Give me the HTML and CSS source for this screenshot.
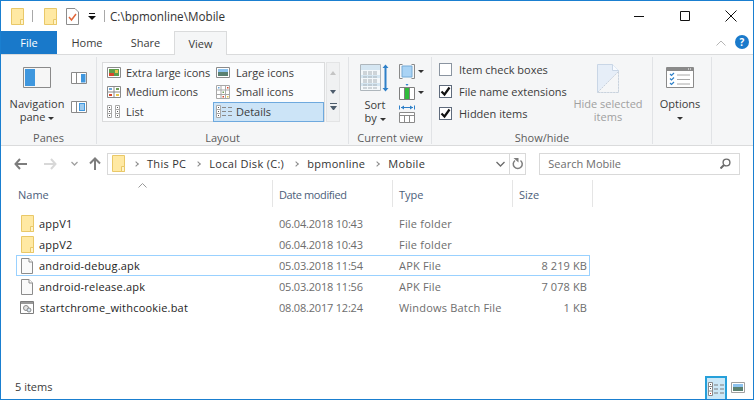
FILE: index.html
```html
<!DOCTYPE html>
<html lang="en">
<head>
<meta charset="UTF-8">
<meta name="viewport" content="width=device-width, initial-scale=1.0">
<title>Mobile</title>
<link rel="stylesheet" href="styles.css">
</head>
<body>

<svg class="defs" width="0" height="0">
    <symbol id="folder" viewBox="0 0 13 17">
        <path d="M.5.5h12v16H.5z" fill="#ffe9a3" stroke="#e9c868"/>
        <path d="M9.5 16.5v-5h3v5z" fill="#fff3c8" stroke="#e9c868"/>
    </symbol>
    <symbol id="doc" viewBox="0 0 12 16">
        <path d="M.5.5h7.5l3.5 3.5v11.5H.5z" fill="#fafafa" stroke="#8c8c8c"/>
        <path d="M8 .5V4h3.5" fill="#fff" stroke="#8c8c8c"/>
    </symbol>
    <symbol id="tick" viewBox="0 0 11 11">
        <path d="M1.500 5.500l3 3 5-7" fill="none" stroke="#111" stroke-width="2.200"/>
    </symbol>
</svg>

<div class="window">

    <div class="titlebar">
        <svg class="ico-folder"><use href="#folder"/></svg>
        <span class="qa-sep"></span>
        <svg class="ico-folder qa-second"><use href="#folder"/></svg>
        <svg class="qa-props" width="13" height="17" viewBox="0 0 13 17">
            <path d="M.5.5h8.5l3.5 3.5v12.500H.5z" fill="#fff" stroke="#8c8c8c"/>
            <path d="M3 9l2.500 3 4.500-6" fill="none" stroke="#e2673a" stroke-width="1.500"/>
        </svg>
        <svg class="qa-more" width="8" height="7" viewBox="0 0 8 7">
            <path d="M1 0h6v1H1zM0 3h8L4 7z" fill="#111"/>
        </svg>
        <span class="qa-sep"></span>
        <span class="title">C:\bpmonline\Mobile</span>
        <div class="controls">
            <svg width="12" height="12" viewBox="0 0 12 12"><path d="M1 6.500h10" stroke="#111"/></svg>
            <svg width="12" height="12" viewBox="0 0 12 12"><path d="M1.500 1.500h9v9h-9z" fill="none" stroke="#111"/></svg>
            <svg width="12" height="12" viewBox="0 0 12 12"><path d="M.5.500l11 11M11.500.500l-11 11" stroke="#111"/></svg>
        </div>
    </div>

    <div class="tabs">
        <div class="tab tab-file">File</div>
        <div class="tab tab-home">Home</div>
        <div class="tab tab-share">Share</div>
        <div class="tab tab-view">View</div>
        <svg class="collapse" width="10" height="6" viewBox="0 0 10 6"><path d="M.5 5.500L5 1l4.500 4.500" fill="none" stroke="#b5b5b5"/></svg>
        <div class="help">?</div>
    </div>

    <div class="ribbon">

        <div class="group group-panes">
            <div class="group-body panes-body">
                <div class="big-btn nav-btn">
                    <svg width="28" height="21" viewBox="0 0 28 21">
                        <path d="M.5.500h27v20H.5z" fill="#f6f6f6" stroke="#8a8a8a"/>
                        <path d="M2 2h10v17H2z" fill="#3f97de"/>
                    </svg>
                    <span class="big-label">Navigation<br>pane <i class="caret"></i></span>
                </div>
                <div class="pane-small">
                    <svg width="16" height="12" viewBox="0 0 16 12">
                        <path d="M.5.500h15v11H.5z" fill="#fff" stroke="#8a8a8a"/>
                        <path d="M10 2h4.500v8.500H10z" fill="#3f97de"/>
                        <path d="M5.500 1v10" stroke="#8a8a8a"/>
                    </svg>
                    <svg width="16" height="12" viewBox="0 0 16 12">
                        <path d="M.5.500h15v11H.5z" fill="#fff" stroke="#8a8a8a"/>
                        <path d="M5.500 1v10" stroke="#8a8a8a"/>
                        <path d="M8 2h6v8H8z" fill="#3f97de"/>
                        <path d="M9 4h4M9 6h4M9 8h4" stroke="#fff"/>
                    </svg>
                </div>
            </div>
            <div class="group-label">Panes</div>
        </div>

        <div class="group group-layout">
            <div class="group-body layout-body">
                <div class="gallery">
                    <div class="gal-item">
                        <svg width="14" height="11" viewBox="0 0 14 11"><path d="M.5.500h13v10H.5z" fill="#fff" stroke="#8a8a8a"/><path d="M2 2h10v7H2z" fill="#5f9e4a"/><path d="M2 6h5v3H2z" fill="#d9472b"/><path d="M8 3h3v3H8z" fill="#e8c54a"/></svg>
                        Extra large icons
                    </div>
                    <div class="gal-item">
                        <svg width="14" height="11" viewBox="0 0 14 11"><path d="M.5.500h13v10H.5z" fill="#fff" stroke="#8a8a8a"/><path d="M2 2h10v3H2z" fill="#8cc2ee"/><path d="M2 5h10v4H2z" fill="#5a8070"/></svg>
                        Large icons
                    </div>
                    <div class="gal-item">
                        <svg width="14" height="12" viewBox="0 0 14 12"><path d="M.5.500h13v11H.5zM.5 6h13M7 .500v11" fill="#fff" stroke="#8a8a8a"/><path d="M2 2h3v2H2z" fill="#6aa5d8"/><path d="M9 2h3v2H9z" fill="#6f9e57"/><path d="M2 8h3v2H2z" fill="#d9472b"/><path d="M9 8h3v2H9z" fill="#e8c54a"/></svg>
                        Medium icons
                    </div>
                    <div class="gal-item">
                        <svg width="14" height="14" viewBox="0 0 14 14"><path d="M.5.500h13v13H.5zM.5 5h13M.5 9.500h13M5 .500v13M9.500.500v13" fill="#fff" stroke="#a8a8a8"/><path d="M2 2h1.500v1.500H2z" fill="#6aa5d8"/><path d="M11 2h1.500v1.500H11zM6.500 11h1.500v1.500H6.500z" fill="#d9472b"/><path d="M6.500 6.500h1.500v1.500H6.500z" fill="#6f9e57"/><path d="M11 11h1.500v1.500H11z" fill="#e8c54a"/></svg>
                        Small icons
                    </div>
                    <div class="gal-item">
                        <svg width="14" height="13" viewBox="0 0 14 13"><path d="M.5.500h4v12h-4zM.5 4.500h4M.5 8.500h4M8.500.500h4v12h-4zM8.500 4.500h4M8.500 8.500h4" fill="#fff" stroke="#a8a8a8"/><path d="M2 2h1v1H2zM2 6h1v1H2zM2 10h1v1H2zM10 2h1v1h-1zM10 6h1v1h-1zM10 10h1v1h-1z" fill="#555"/></svg>
                        List
                    </div>
                    <div class="gal-item gal-selected">
                        <svg width="16" height="13" viewBox="0 0 16 13"><path d="M.5.500h4v12h-4zM.5 4.500h4M.5 8.500h4" fill="#fff" stroke="#a8a8a8"/><path d="M2 2h1v1H2zM2 6h1v1H2zM2 10h1v1H2z" fill="#555"/><path d="M6 2.500h4M12 2.500h4M6 6.500h4M12 6.500h4M6 10.500h4M12 10.500h4" stroke="#8a8a8a"/></svg>
                        Details
                    </div>
                </div>
                <div class="gal-scroll">
                    <span class="up"></span>
                    <span class="down"></span>
                    <span class="more"></span>
                </div>
            </div>
            <div class="group-label">Layout</div>
        </div>

        <div class="group group-current">
            <div class="group-body current-body">
                <div class="big-btn sort-btn">
                    <svg width="30" height="28" viewBox="0 0 30 28">
                        <path d="M.5.500h20v26H.5z" fill="#f4f8fb" stroke="#aeb6bc"/>
                        <path d="M1 1h19v5H1zM1 11h19v3H1zM1 19h19v3H1z" fill="#d5e6f2"/>
                        <path d="M3 8h15M3 10h15M3 13h15M3 16h15M3 18h15M3 21h15M3 24h15" stroke="#a8b0b6" stroke-dasharray="4 1"/>
                        <path d="M25.500 2v24" stroke="#2f80c8" stroke-width="2"/>
                        <path d="M22.500 4l3-3.500 3 3.500zM22.500 24l3 3.500 3-3.500z" fill="#2f80c8"/>
                    </svg>
                    <span class="big-label">Sort<br>by <i class="caret"></i></span>
                </div>
                <div class="current-small">
                    <div class="cur-icon">
                        <svg width="16" height="15" viewBox="0 0 16 15"><path d="M3.500.500h-3v14h3M12.500.500h3v14h-3" fill="none" stroke="#8a8a8a"/><path d="M3 2h10v11H3z" fill="#a9d3f5" stroke="#76abd6"/></svg>
                        <i class="caret"></i>
                    </div>
                    <div class="cur-icon">
                        <svg width="16" height="16" viewBox="0 0 16 16"><path d="M.5 3.500h15v12H.5zM5.500 3.500v12M10.500 3.500v12" fill="#fff" stroke="#7f7f7f"/><path d="M6 4h4v11H6z" fill="#2fbb3b"/><path d="M6.500 0h3L8 2z" fill="#2f80c8"/></svg>
                        <i class="caret"></i>
                    </div>
                    <div class="cur-icon">
                        <svg width="16" height="18" viewBox="0 0 16 18"><path d="M.5.500v4M15.500.500v4M2 2.500h12" stroke="#2f80c8"/><path d="M5 .500L2 2.500l3 2zM11 .500l3 2-3 2z" fill="#2f80c8"/><path d="M.5 7.500h15v10H.5zM.5 10.500h15M5.500 10.500v7M10.500 10.500v7" fill="#fff" stroke="#8a8a8a"/></svg>
                    </div>
                </div>
            </div>
            <div class="group-label">Current view</div>
        </div>

        <div class="group group-show">
            <div class="group-body show-body">
                <div class="checks">
                    <div class="check-row"><span class="check"></span>Item check boxes</div>
                    <div class="check-row"><span class="check"><svg class="tick"><use href="#tick"/></svg></span>File name extensions</div>
                    <div class="check-row"><span class="check"><svg class="tick"><use href="#tick"/></svg></span>Hidden items</div>
                </div>
                <div class="big-btn hide-btn">
                    <svg width="22" height="29" viewBox="0 0 22 29">
                        <path d="M.5.500h15l6 6v22H.5z" fill="#e6eef8" stroke="#c9d6e6"/>
                        <path d="M15.500.500v6h6" fill="#f8fbff" stroke="#c9d6e6"/>
                        <path d="M.5 28.500l21-21v21z" fill="#f5f6f7"/>
                        <path d="M.5 28.500l21-21v21z" fill="none" stroke="#c9d2dc" stroke-dasharray="2 1"/>
                    </svg>
                    <span class="big-label">Hide selected<br>items</span>
                </div>
            </div>
            <div class="group-label">Show/hide</div>
        </div>

        <div class="group group-options">
            <div class="group-body options-body">
                <div class="big-btn">
                    <svg width="28" height="21" viewBox="0 0 28 21">
                        <path d="M.5.500h27v20H.5z" fill="#fff" stroke="#8a8a8a"/>
                        <path d="M1 1h26v3H1z" fill="#8a8a8a"/>
                        <path d="M22 2h1M24 2h1" stroke="#fff"/>
                        <path d="M4 7l1.500 1.500L8 6M4 11.500l1.500 1.500L8 10.500M4 16l1.500 1.500L8 15" fill="none" stroke="#2f80c8" stroke-width="1.200"/>
                        <path d="M11 8h13M11 12.500h13M11 17h13" stroke="#a8a8a8"/>
                    </svg>
                    <span class="big-label">Options<br><i class="caret"></i></span>
                </div>
            </div>
        </div>
    </div>

    <div class="navbar">
        <svg class="nav-back" width="13" height="12" viewBox="0 0 13 12"><path d="M6 1L1.500 6 6 11M2 6h11" fill="none" stroke="#7d7d7d" stroke-width="2"/></svg>
        <svg class="nav-fwd" width="13" height="12" viewBox="0 0 13 12"><path d="M7 1l4.500 5L7 11M11 6H0" fill="none" stroke="#d8d8d8" stroke-width="2"/></svg>
        <svg class="nav-down" width="7" height="5" viewBox="0 0 7 5"><path d="M.5 1L3.500 4l3-3" fill="none" stroke="#a0a0a0" stroke-width="1.300"/></svg>
        <svg class="nav-up" width="12" height="13" viewBox="0 0 12 13"><path d="M1 6.500L6 1.500l5 5M6 2v11" fill="none" stroke="#7d7d7d" stroke-width="2"/></svg>
        <div class="address">
            <svg class="ico-folder addr-folder"><use href="#folder"/></svg>
            <span class="crumb-sep"></span><span class="crumb">This PC</span>
            <span class="crumb-sep"></span><span class="crumb">Local Disk (C:)</span>
            <span class="crumb-sep"></span><span class="crumb">bpmonline</span>
            <span class="crumb-sep"></span><span class="crumb">Mobile</span>
            <svg class="addr-drop" width="9" height="6" viewBox="0 0 9 6"><path d="M.5 1l4 4 4-4" fill="none" stroke="#6b6b6b" stroke-width="1.300"/></svg>
            <div class="addr-refresh">
                <svg width="12" height="13" viewBox="0 0 12 13"><path d="M3 3.500A4.500 4.500 0 1 0 8.500 3.500" fill="none" stroke="#7d7d7d" stroke-width="1.500"/><path d="M1.500 1h5v4.500z" fill="#7d7d7d"/></svg>
            </div>
        </div>
        <div class="search">
            <span>Search Mobile</span>
            <svg width="11" height="11" viewBox="0 0 11 11"><circle cx="6.500" cy="4.500" r="3.400" fill="none" stroke="#6b6b6b" stroke-width="1.400"/><path d="M4 7L.5 10.500" stroke="#6b6b6b" stroke-width="2"/></svg>
        </div>
    </div>

    <div class="files">
        <div class="head">
            <svg class="sort-caret" width="9" height="5" viewBox="0 0 9 5"><path d="M.5 4.500l4-4 4 4" fill="none" stroke="#9a9a9a"/></svg>
            <div class="col col-name">Name</div>
            <div class="col col-date">Date modified</div>
            <div class="col">Type</div>
            <div class="col">Size</div>
        </div>
        <div class="rows">
            <div class="row">
                <div class="cell-name"><svg class="ico-folder"><use href="#folder"/></svg>appV1</div>
                <div class="cell cell-date">06.04.2018 10:43</div>
                <div class="cell cell-type">File folder</div>
                <div class="cell cell-size"></div>
            </div>
            <div class="row">
                <div class="cell-name"><svg class="ico-folder"><use href="#folder"/></svg>appV2</div>
                <div class="cell cell-date">06.04.2018 10:43</div>
                <div class="cell cell-type">File folder</div>
                <div class="cell cell-size"></div>
            </div>
            <div class="row row-focus">
                <div class="cell-name"><svg class="ico-doc"><use href="#doc"/></svg>android-debug.apk</div>
                <div class="cell cell-date">05.03.2018 11:54</div>
                <div class="cell cell-type">APK File</div>
                <div class="cell cell-size">8 219 KB</div>
            </div>
            <div class="row">
                <div class="cell-name"><svg class="ico-doc"><use href="#doc"/></svg>android-release.apk</div>
                <div class="cell cell-date">05.03.2018 11:56</div>
                <div class="cell cell-type">APK File</div>
                <div class="cell cell-size">7 078 KB</div>
            </div>
            <div class="row">
                <div class="cell-name">
                    <svg class="ico-bat" width="14" height="13" viewBox="0 0 14 13">
                        <path d="M.5.500h13v12H.5z" fill="#fff" stroke="#7d7d7d"/>
                        <path d="M1 1h12v2H1z" fill="#9a9a9a"/>
                        <circle cx="6" cy="7" r="2.500" fill="#e4e4e4" stroke="#8a8a8a"/>
                        <circle cx="9" cy="9" r="2" fill="#d4e4f2" stroke="#8a8a8a"/>
                    </svg>startchrome_withcookie.bat
                </div>
                <div class="cell cell-date">08.08.2017 12:24</div>
                <div class="cell cell-type">Windows Batch File</div>
                <div class="cell cell-size">1 KB</div>
            </div>
        </div>
    </div>

    <div class="status">
        <span class="count">5 items</span>
        <div class="view-toggle view-on">
            <svg width="16" height="14" viewBox="0 0 16 14"><path d="M.5.500h4v13h-4zM.5 4.500h4M.5 9h4" fill="#fff" stroke="#8a8a8a"/><path d="M2 2h1v1H2zM2 6h1v1H2z" fill="#555"/><path d="M2 11h1v1H2z" fill="#c0392b"/><path d="M6 3h4M12 3h4M6 7h4M12 7h4M6 11h4M12 11h4" stroke="#7d7d7d"/></svg>
        </div>
        <div class="view-toggle view-large">
            <svg width="14" height="11" viewBox="0 0 14 11"><path d="M.5.500h13v10H.5z" fill="#fff" stroke="#a0a0a0"/><path d="M2 2h10v3H2z" fill="#8cc2ee"/><path d="M2 5h10v4H2z" fill="#5a8070"/></svg>
        </div>
    </div>
</div>

</body>
</html>
```

FILE: styles.css
```css
* {
    box-sizing: border-box;
}
html, body {
    margin: 0;
    padding: 0;
}
body {
    width: 754px;
    height: 400px;
    overflow: hidden;
    background: #fff;
    color: #1e1e1e;
    font-family: "Open Sans", "Noto Sans", sans-serif;
    font-size: 11px;
    line-height: 13px;
}
.defs {
    position: absolute;
}
svg {
    display: block;
    flex: none;
}
.window {
    width: 754px;
    height: 400px;
    border: 1px solid #1a7fd0;
    display: flex;
    flex-direction: column;
}

/* title bar */
.titlebar {
    height: 30px;
    display: flex;
    align-items: center;
    padding-left: 10px;
}
.ico-folder {
    width: 13px;
    height: 17px;
}
.qa-sep {
    width: 1px;
    height: 12px;
    background: #a8a8a8;
    margin-left: 8px;
}
.qa-second {
    margin-left: 11px;
}
.qa-props {
    margin-left: 9px;
}
.qa-more {
    margin-left: 9px;
}
.title {
    margin-left: 5px;
    font-size: 11.700px;
    color: #333;
}
.controls {
    margin-left: auto;
    display: flex;
    gap: 34px;
    padding-right: 16px;
}

/* tabs */
.tabs {
    height: 23px;
    display: flex;
    align-items: flex-end;
    position: relative;
    z-index: 1;
}
.tab {
    height: 23px;
    display: flex;
    align-items: center;
    justify-content: center;
    color: #3b3b3b;
}
.tab-file {
    width: 56px;
    background: #1979ca;
    color: #fff;
}
.tab-home {
    width: 60px;
}
.tab-share {
    width: 57px;
}
.tab-view {
    width: 53px;
    background: #f5f6f7;
    border: 1px solid #dadbdc;
    border-bottom: none;
    margin-bottom: -1px;
    height: 24px;
}
.collapse {
    margin-left: auto;
    margin-bottom: 8px;
}
.help {
    width: 14px;
    height: 14px;
    border-radius: 50%;
    background: #1a7acb;
    color: #fff;
    font-weight: 700;
    font-size: 10px;
    line-height: 14px;
    text-align: center;
    margin: 0 4px 5px 9px;
}

/* ribbon */
.ribbon {
    height: 92px;
    background: #f5f6f7;
    border-top: 1px solid #dadbdc;
    border-bottom: 1px solid #dadbdc;
    display: flex;
    padding-top: 2px;
}
.group {
    height: 87px;
    border-right: 1px solid #e1e3e6;
    display: flex;
    flex-direction: column;
}
.group-body {
    flex: 1;
    display: flex;
    min-height: 0;
}
.group-label {
    height: 14px;
    text-align: center;
    color: #5c5c5c;
    line-height: 15px;
}
.group-panes {
    width: 96px;
}
.group-layout {
    width: 252px;
}
.group-current {
    width: 83px;
}
.group-show {
    width: 221px;
}
.group-options {
    width: 59px;
}
.big-btn {
    display: flex;
    flex-direction: column;
    align-items: center;
}
.big-label {
    display: block;
    text-align: center;
    color: #3b3b3b;
    white-space: nowrap;
}
.caret {
    display: inline-block;
    width: 0;
    height: 0;
    border: 3px solid transparent;
    border-top: 3px solid #333;
    border-bottom: none;
    vertical-align: middle;
}

/* panes */
.panes-body {
    padding-left: 8px;
}
.nav-btn {
    padding-top: 10px;
    width: 56px;
}
.nav-btn .big-label {
    margin-top: 9px;
}
.pane-small {
    margin-left: 6px;
    padding-top: 15px;
    display: flex;
    flex-direction: column;
    gap: 17px;
}

/* layout gallery */
.layout-body {
    padding: 5px 0 0 5px;
}
.gallery {
    width: 223px;
    height: 60px;
    background: #fbfcfd;
    border: 1px solid #dadbdc;
    display: grid;
    grid-template-columns: 110px 111px;
    grid-template-rows: 19px 20px 20px;
}
.gal-item {
    display: flex;
    align-items: center;
    gap: 4px;
    padding: 0 0 1px 3px;
    white-space: nowrap;
    color: #3b3b3b;
}
.gal-item:nth-child(even) {
    padding-left: 2px;
    gap: 5px;
}
.gal-item svg {
    width: 16px;
}
.gallery .gal-selected {
    background: #cce4f7;
    border: 1px solid #6ea9de;
    padding-left: 2px;
    gap: 4px;
}
.gal-scroll {
    width: 14px;
    height: 60px;
    margin-left: 1px;
    background: #f0f1f2;
    border: 1px solid #e3e4e5;
    display: flex;
    flex-direction: column;
    align-items: center;
}
.gal-scroll span {
    display: block;
    width: 0;
    height: 0;
    border-left: 3.500px solid transparent;
    border-right: 3.500px solid transparent;
}
.gal-scroll .up {
    margin-top: 8px;
    border-bottom: 4px solid #c4c4c4;
}
.gal-scroll .down {
    margin-top: 15px;
    border-top: 4px solid #4d5c6c;
}
.gal-scroll .more {
    margin-top: 12px;
    width: 7px;
    border-top: 4px solid #4d5c6c;
    box-shadow: 0 -2px 0 #f0f1f2, 0 -3px 0 #4d5c6c;
}

/* current view */
.current-body {
    padding: 7px 0 0 11px;
}
.sort-btn .big-label {
    margin-top: 6px;
}
.current-small {
    margin-left: 9px;
    display: flex;
    flex-direction: column;
    gap: 5px;
}
.cur-icon {
    display: flex;
    align-items: center;
    gap: 3px;
}

/* show/hide */
.show-body {
    padding: 5px 0 0 7px;
}
.checks {
    width: 148px;
    display: flex;
    flex-direction: column;
    gap: 8px;
}
.check-row {
    height: 14px;
    display: flex;
    align-items: center;
    gap: 7px;
    color: #3b3b3b;
    white-space: nowrap;
}
.check {
    width: 13px;
    height: 13px;
    background: #fff;
    border: 1px solid #5f6b7c;
}
.check-row:first-child .check {
    border-color: #8a94a0;
}
.tick {
    width: 11px;
    height: 11px;
}
.hide-btn {
    width: 68px;
    padding-top: 2px;
    margin-left: -13px;
}
.hide-btn .big-label {
    margin-top: 4px;
    color: #a0a0a0;
}

/* options */
.options-body {
    padding: 10px 4px 0 0;
    justify-content: center;
}
.options-body .big-label {
    margin-top: 9px;
}

/* navigation bar */
.navbar {
    height: 35px;
    display: flex;
    align-items: center;
    padding: 0 13px;
}
.nav-fwd {
    margin-left: 17px;
}
.nav-down {
    margin-left: 14px;
}
.nav-up {
    margin-left: 11px;
}
.address {
    width: 420px;
    height: 22px;
    margin-left: 6px;
    border: 1px solid #d9d9d9;
    display: flex;
    align-items: center;
    padding-left: 4px;
    color: #333;
}
.addr-folder {
    margin-right: 6px;
}
.crumb-sep {
    width: 4px;
    height: 4px;
    border-top: 1.500px solid #8a8a8a;
    border-right: 1.500px solid #8a8a8a;
    transform: rotate(45deg);
    margin: 0 8px 0 3px;
}
.crumb {
    margin: 0 7px 0 1px;
    letter-spacing: .3px;
    white-space: nowrap;
}
.addr-drop {
    margin-left: auto;
    margin-right: 4px;
}
.addr-refresh {
    width: 16px;
    height: 20px;
    border-left: 1px solid #d9d9d9;
    display: flex;
    align-items: center;
    justify-content: center;
}
.search {
    width: 201px;
    height: 22px;
    margin-left: 13px;
    border: 1px solid #d9d9d9;
    display: flex;
    align-items: center;
    justify-content: space-between;
    padding: 0 8px;
    color: #6d6d6d;
}

/* file list */
.files {
    flex: 1;
    position: relative;
    min-height: 0;
}
.head {
    height: 27px;
    display: grid;
    grid-template-columns: 272px 120px 120px 80px;
    margin-top: -1px;
    color: #4c607a;
}
.col {
    border-right: 1px solid #e5e5e5;
    padding: 8px 0 0 6px;
}
.col-name {
    padding-left: 17px;
}
.col-date {
    letter-spacing: -.4px;
}
.sort-caret {
    position: absolute;
    left: 137px;
    top: 2px;
}
.rows {
    margin-top: 6px;
    display: flex;
    flex-direction: column;
}
.row {
    height: 21px;
    margin-left: 15px;
    width: 574px;
    display: grid;
    grid-template-columns: 256px 120px 120px 78px;
    align-items: center;
    border: 1px solid transparent;
    color: #6d6d6d;
}
.row-focus {
    border-color: #99d1ff;
}
.cell-name {
    display: flex;
    align-items: center;
    color: #1e1e1e;
    letter-spacing: .2px;
    white-space: nowrap;
}
.cell-name .ico-folder {
    margin: 0 5px 0 4px;
}
.ico-doc {
    width: 12px;
    height: 16px;
    margin: 0 6px 0 4px;
}
.ico-bat {
    margin: 0 6px 0 3px;
}
.cell {
    padding-left: 6px;
    white-space: nowrap;
}
.cell-date {
    letter-spacing: -.2px;
}
.cell-type {
    letter-spacing: .2px;
}
.cell-size {
    text-align: right;
    padding-right: 4px;
    letter-spacing: .1px;
}

/* status bar */
.status {
    height: 23px;
    display: flex;
    align-items: center;
    padding: 0 0 2px 14px;
}
.count {
    margin-right: auto;
    color: #3b3b3b;
}
.view-toggle {
    width: 22px;
    height: 23px;
    display: flex;
    align-items: center;
    justify-content: center;
    border: 1px solid transparent;
}
.view-on {
    background: #cce8f7;
    border: 2px solid #26a0da;
    border-bottom: none;
    margin-bottom: -2px;
}
.view-large {
    margin-right: 4px;
    margin-bottom: -2px;
}
```
